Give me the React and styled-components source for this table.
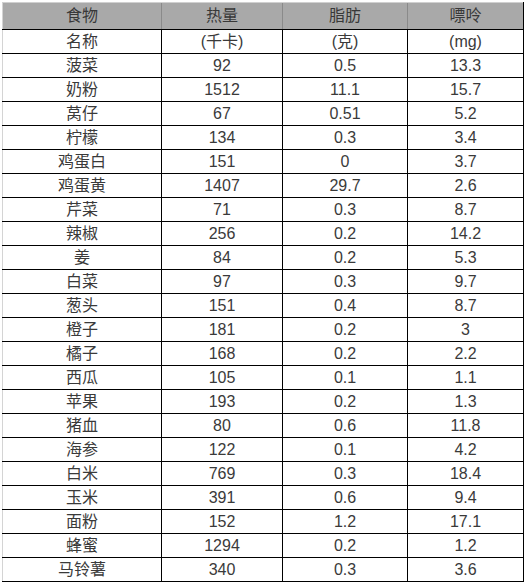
import React from "react";
import styled, { createGlobalStyle } from "styled-components";

const GlobalStyle = createGlobalStyle`
  html, body {
    margin: 0;
    padding: 0;
    background: #ffffff;
  }
`;

const rows = [
  ["名称", "(千卡)", "(克)", "(mg)"],
  ["菠菜", "92", "0.5", "13.3"],
  ["奶粉", "1512", "11.1", "15.7"],
  ["莴仔", "67", "0.51", "5.2"],
  ["柠檬", "134", "0.3", "3.4"],
  ["鸡蛋白", "151", "0", "3.7"],
  ["鸡蛋黄", "1407", "29.7", "2.6"],
  ["芹菜", "71", "0.3", "8.7"],
  ["辣椒", "256", "0.2", "14.2"],
  ["姜", "84", "0.2", "5.3"],
  ["白菜", "97", "0.3", "9.7"],
  ["葱头", "151", "0.4", "8.7"],
  ["橙子", "181", "0.2", "3"],
  ["橘子", "168", "0.2", "2.2"],
  ["西瓜", "105", "0.1", "1.1"],
  ["苹果", "193", "0.2", "1.3"],
  ["猪血", "80", "0.6", "11.8"],
  ["海参", "122", "0.1", "4.2"],
  ["白米", "769", "0.3", "18.4"],
  ["玉米", "391", "0.6", "9.4"],
  ["面粉", "152", "1.2", "17.1"],
  ["蜂蜜", "1294", "0.2", "1.2"],
  ["马铃薯", "340", "0.3", "3.6"],
];

const widths = [159, 121, 125, 116];

const Page = styled.div`
  padding: 2px 0 0 2px;
  font-family: "Liberation Sans", "Noto Sans CJK SC", sans-serif;
`;

const Table = styled.table`
  border-collapse: collapse;
  table-layout: fixed;
  width: 522px;
  color: #3a3a3a;
  font-size: 16px;
`;

const HeadCell = styled.th`
  height: 26px;
  padding: 0;
  font-weight: normal;
  background: #a9a9a9;
  color: #383838;
  border-top: 1px solid #d0d0d0;
  border-left: 1px solid ${(p) => (p.$first ? "#d4d4d4" : "#8a8a8a")};
  border-right: ${(p) => (p.$last ? "1px solid #000" : "none")};
  border-bottom: 1px solid #000;
  text-align: center;
  vertical-align: middle;
  line-height: 24px;
`;

const Cell = styled.td`
  height: 23px;
  padding: 0;
  text-align: center;
  vertical-align: middle;
  border-bottom: 1px solid #000;
  border-left: 1px solid ${(p) => (p.$first ? "#d4d4d4" : "#000")};
  border-right: ${(p) => (p.$last ? "1px solid #000" : "none")};
  line-height: 22px;
`;

export default function App() {
  return (
    <Page>
      <GlobalStyle />
      <Table>
        <colgroup>
          {widths.map((w, i) => (
            <col key={i} style={{ width: w }} />
          ))}
        </colgroup>
        <thead>
          <tr>
            {["食物", "热量", "脂肪", "嘌呤"].map((h, i) => (
              <HeadCell key={h} $first={i === 0} $last={i === 3}>
                {h}
              </HeadCell>
            ))}
          </tr>
        </thead>
        <tbody>
          {rows.map((r) => (
            <tr key={r[0]}>
              {r.map((v, i) => (
                <Cell key={i} $first={i === 0} $last={i === 3}>
                  {v}
                </Cell>
              ))}
            </tr>
          ))}
        </tbody>
      </Table>
    </Page>
  );
}
